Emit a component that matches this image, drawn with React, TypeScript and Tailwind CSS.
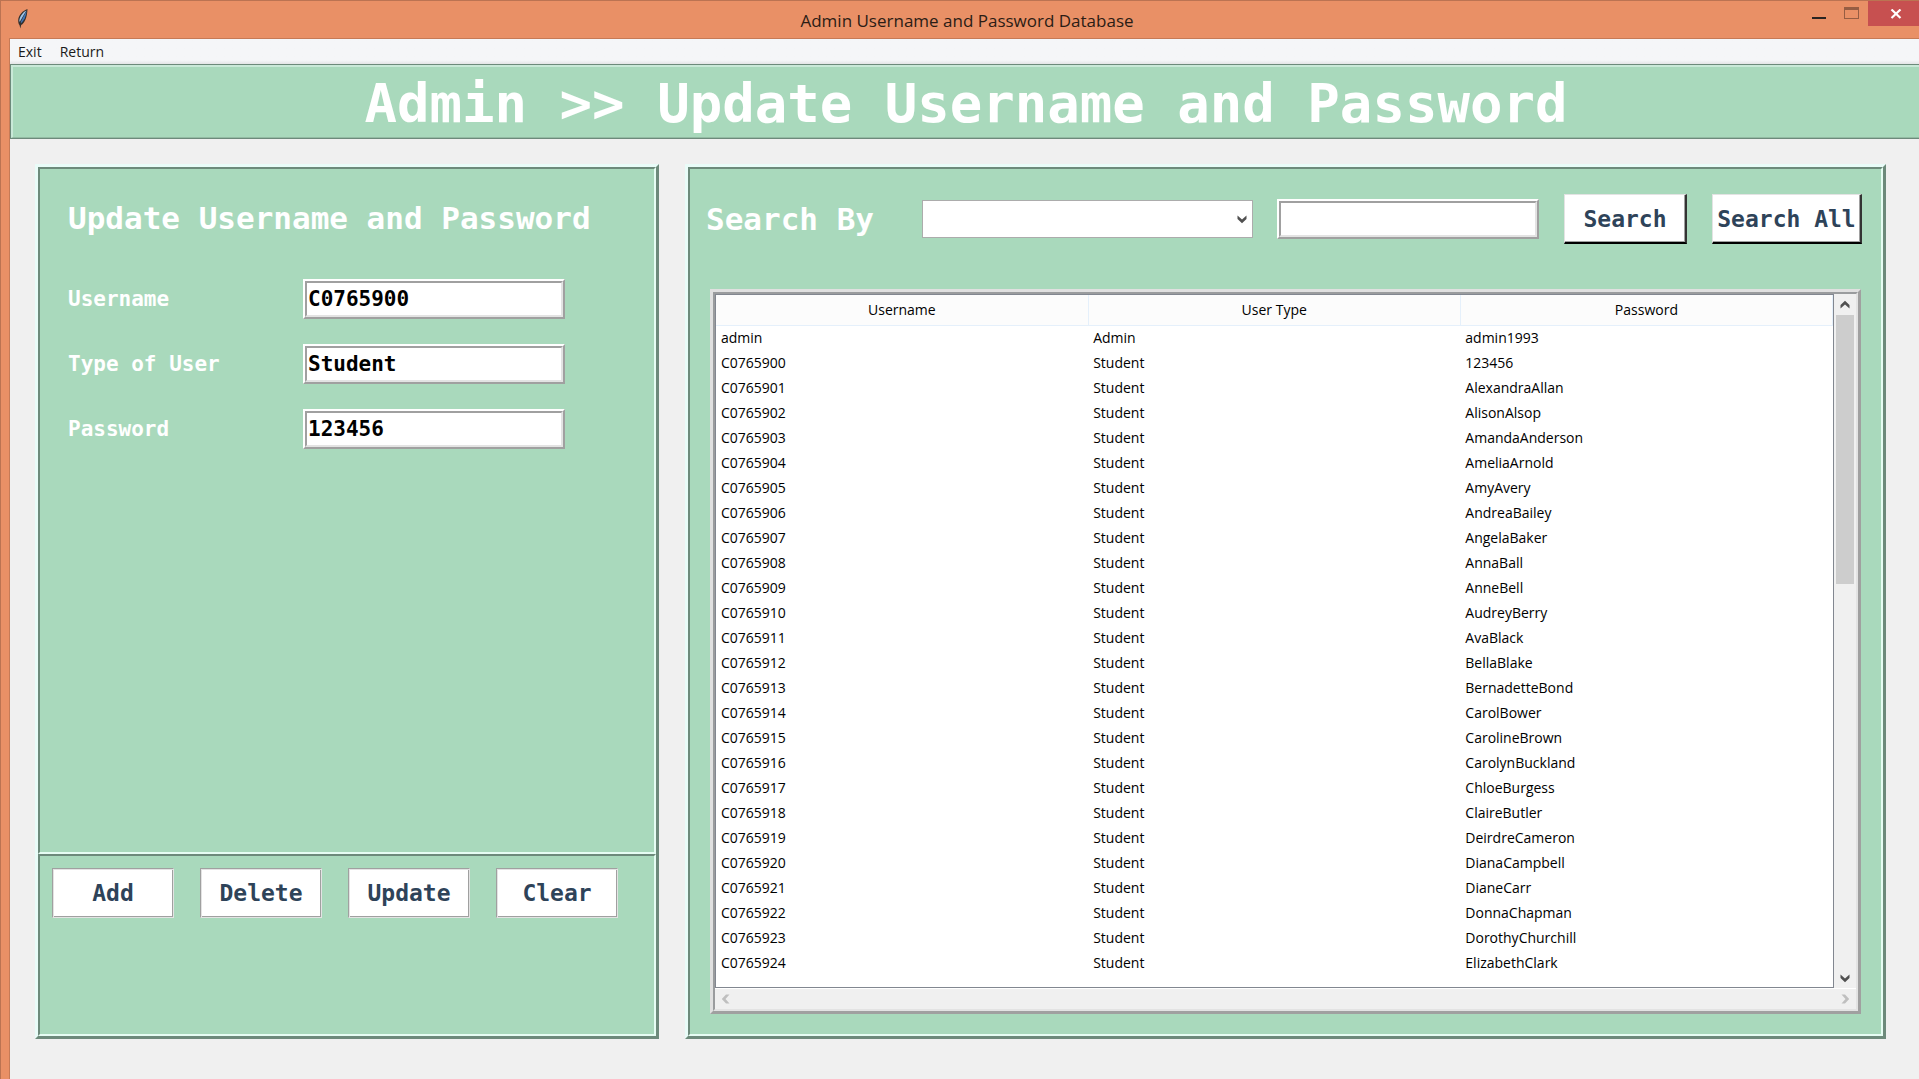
import type { ReactNode } from "react";

const mono = "font-['DejaVu_Sans_Mono',monospace] font-bold";
const sans = "font-['Open_Sans',sans-serif]";

const accounts: [string, string, string][] = [
  ["admin", "Admin", "admin1993"],
  ...[
    "123456",
    "AlexandraAllan",
    "AlisonAlsop",
    "AmandaAnderson",
    "AmeliaArnold",
    "AmyAvery",
    "AndreaBailey",
    "AngelaBaker",
    "AnnaBall",
    "AnneBell",
    "AudreyBerry",
    "AvaBlack",
    "BellaBlake",
    "BernadetteBond",
    "CarolBower",
    "CarolineBrown",
    "CarolynBuckland",
    "ChloeBurgess",
    "ClaireButler",
    "DeirdreCameron",
    "DianaCampbell",
    "DianeCarr",
    "DonnaChapman",
    "DorothyChurchill",
    "ElizabethClark",
  ].map((password, i): [string, string, string] => [`C0${765900 + i}`, "Student", password]),
];

const fields = [
  { id: "username", label: "Username", value: "C0765900" },
  { id: "usertype", label: "Type of User", value: "Student" },
  { id: "password", label: "Password", value: "123456" },
];

const innerRidge =
  "border-2 border-t-[#6d8a7b] border-l-[#6d8a7b] border-r-[#e6fdf3] border-b-[#e6fdf3]";

function Panel({ className, children }: { className: string; children: ReactNode }) {
  return (
    <div
      className={`flex flex-col border-3 border-t-[#e9fcf8] border-l-[#e9fcf8] border-r-[#6d8a7b] border-b-[#6d8a7b] bg-[#a9d9bc] ${className}`}
    >
      {children}
    </div>
  );
}

function Entry({ id, label, value }: { id: string; label: string; value: string }) {
  return (
    <div className="h-10 w-[262px] shrink-0 border-2 border-t-white border-l-white border-r-[#a0a0a0] border-b-[#a0a0a0]">
      <input
        id={id}
        aria-label={label}
        defaultValue={value}
        className={`block h-full w-full border-2 border-t-[#a0a0a0] border-l-[#a0a0a0] border-r-[#e3e3e3] border-b-[#e3e3e3] bg-white px-px text-[21px] leading-6 text-black outline-none ${mono}`}
      />
    </div>
  );
}

function Chevron({ turn, color }: { turn: string; color: string }) {
  return (
    <svg width="10" height="10" viewBox="0 0 10 10" className={turn} aria-hidden="true">
      <path d="M.5 1.500 5 5.500 9.500 1.500V5L5 9.200 .5 5Z" fill={color} />
    </svg>
  );
}

function TitleBar() {
  return (
    <header className={`flex h-[38px] items-start border-t border-t-[#bb7352] pl-3.5 ${sans}`}>
      <svg width="16" height="22" viewBox="0 0 16 22" className="mt-[7px]" aria-hidden="true">
        <path d="M12.5 1C8 2.5 3.5 7 3.2 12.2c0 2 .3 3.800 1.300 4.800l.8 3.500.9-3.500C9.500 15 12 10.500 12.500 1Z" fill="#34302e" />
        <path d="M11.500 2.500C8 4 5 8 4.300 12.500l.4 1.500L9 6.500Z" fill="#9cc4e8" />
        <path d="M11.600 3C11 8.500 9 12.500 6.300 15l-.6-.8L9 7.500Z" fill="#3f78bd" />
      </svg>
      <h1 className="flex-1 pt-1.5 pl-[100px] text-center text-[17px] leading-7 text-[#2b1c15]">
        Admin Username and Password Database
      </h1>
      <button aria-label="Minimize" className="flex h-[25px] w-8 justify-center pt-4">
        <span className="h-0.5 w-3.5 bg-[#2a2422]" />
      </button>
      <button aria-label="Maximize" className="flex h-[25px] w-8 justify-center pt-1.5">
        <span className="h-3 w-[15px] border border-t-3 border-[#965d43]" />
      </button>
      <button
        aria-label="Close"
        className="ml-px flex h-[25px] w-[51px] items-center justify-center bg-[#c75050] pl-1"
      >
        <svg width="12" height="10" viewBox="0 0 12 10" aria-hidden="true">
          <path d="M1.500 .5 10.500 9M10.500 .5 1.500 9" stroke="#fff" strokeWidth="2.200" />
        </svg>
      </button>
    </header>
  );
}

function UpdatePanel() {
  return (
    <Panel className="w-[624px] shrink-0">
      <section className={`flex-1 pt-[29px] pl-7 ${innerRidge}`}>
        <h3 className={`text-[31px] leading-10 text-white ${mono}`}>Update Username and Password</h3>
        <div className="mt-[41px] flex flex-col gap-[25px]">
          {fields.map((f) => (
            <div key={f.id} className="flex items-center">
              <label htmlFor={f.id} className={`w-[235px] text-[21px] leading-6 text-white ${mono}`}>
                {f.label}
              </label>
              <Entry {...f} />
            </div>
          ))}
        </div>
      </section>
      <section className={`flex h-[182px] items-start gap-[26px] p-3 ${innerRidge}`}>
        {["Add", "Delete", "Update", "Clear"].map((name) => (
          <button
            key={name}
            className={`h-[50px] w-[122px] border border-t-[#a0a0a0] border-l-[#a0a0a0] border-r-[#e3e3e3] border-b-[#e3e3e3] bg-white text-[23px] leading-7 text-[#2e4359] shadow-[inset_1px_1px_0_#e3e3e3,inset_-1px_-1px_0_#a0a0a0] ${mono}`}
          >
            {name}
          </button>
        ))}
      </section>
    </Panel>
  );
}

const raised =
  "h-[50px] shrink-0 border border-t-[#e3e3e3] border-l-[#e3e3e3] border-r-[#333] border-b-black border-r-2 border-b-2 bg-white text-[23px] leading-7 text-[#2e4359] shadow-[inset_-1px_-1px_0_#a0a0a0]";

function SearchPanel() {
  return (
    <Panel className="min-w-0 flex-1">
      <section className={`flex flex-1 flex-col pt-[25px] pr-[19px] pb-5 pl-4 ${innerRidge}`}>
        <div className="flex items-center">
          <label htmlFor="search-by" className={`w-[216px] shrink-0 text-[31px] leading-10 text-white ${mono}`}>
            Search By
          </label>
          <div className="relative h-[38px] flex-1">
            <select
              id="search-by"
              defaultValue=""
              className="h-full w-full appearance-none border border-[#acacac] bg-white outline-none"
            >
              <option value=""></option>
            </select>
            <span className="pointer-events-none absolute inset-y-0 right-1.5 flex items-center">
              <Chevron turn="" color="#505050" />
            </span>
          </div>
          <div className="ml-6 flex items-center gap-[25px]">
            <Entry id="search-text" label="Search text" value="" />
            <button className={`w-[123px] ${raised} ${mono}`}>Search</button>
            <button className={`w-[150px] ${raised} ${mono}`}>Search All</button>
          </div>
        </div>

        <div className="mt-[45px] mr-px ml-1 flex flex-1 flex-col border-3 border-t-[#e0e0e0] border-l-[#e0e0e0] border-r-[#a0a0a0] border-b-[#a0a0a0]">
          <div className="flex flex-1 flex-col border-2 border-t-[#9a9c9e] border-l-[#9a9c9e] border-r-[#e3e3e3] border-b-[#e3e3e3] bg-[#f0f0f0]">
            <div className="flex flex-1">
              <div className="flex-1 border border-[#828790] bg-white">
                <table className={`w-full table-fixed border-collapse text-sm text-black ${sans}`}>
                  <thead>
                    <tr className="h-[30px] bg-[#fcfcfc]">
                      {["Username", "User Type", "Password"].map((h) => (
                        <th key={h} className="border-r border-b border-[#e5f0fb] p-0 font-normal">
                          {h}
                        </th>
                      ))}
                    </tr>
                  </thead>
                  <tbody>
                    {accounts.map((row) => (
                      <tr key={row[0]} className="h-[25px]">
                        {row.map((cell, i) => (
                          <td key={i} className="p-0 pl-[5px]">
                            {cell}
                          </td>
                        ))}
                      </tr>
                    ))}
                  </tbody>
                </table>
              </div>
              <div className="flex w-[22px] flex-col items-center">
                <button aria-label="Scroll up" className="flex h-[21px] items-center">
                  <Chevron turn="rotate-180" color="#505050" />
                </button>
                <div className="h-[269px] w-[18px] bg-[#cdcdcd]" />
                <div className="flex-1" />
                <button aria-label="Scroll down" className="flex h-[21px] items-center">
                  <Chevron turn="" color="#505050" />
                </button>
              </div>
            </div>
            <div className="flex h-[21px] items-center justify-between border-t border-t-white px-1.5">
              <button aria-label="Scroll left">
                <Chevron turn="rotate-90" color="#bfbfbf" />
              </button>
              <button aria-label="Scroll right">
                <Chevron turn="-rotate-90" color="#bfbfbf" />
              </button>
            </div>
          </div>
        </div>
      </section>
    </Panel>
  );
}

export default function App() {
  return (
    <div className="flex min-h-screen flex-col border-l border-l-[#bb7352] bg-[#e99066]">
      <TitleBar />
      <div className="ml-2 flex flex-1 flex-col border-t border-l border-[#c67a56] bg-[#f0f0f0]">
        <nav
          className={`flex h-[25px] items-center gap-[18px] bg-linear-to-b from-[#f5f6f8] from-85% to-[#e4e5e6] pl-2 text-sm text-[#1a1a1a] ${sans}`}
        >
          <button>Exit</button>
          <button>Return</button>
        </nav>
        <div className="border border-r-0 border-[#6d8a7b] bg-[#a9d9bc]">
          <h2
            className={`border-t-2 border-l-2 border-t-[#c9e9d8] border-l-[#c9e9d8] border-b border-b-[#93bba3] pt-1 text-center text-[54px] leading-[66px] text-white ${mono}`}
          >
            Admin &gt;&gt; Update Username and Password
          </h2>
        </div>
        <main className="flex flex-1 gap-[26px] pt-[25px] pr-[33px] pb-10 pl-[25px]">
          <UpdatePanel />
          <SearchPanel />
        </main>
      </div>
    </div>
  );
}
